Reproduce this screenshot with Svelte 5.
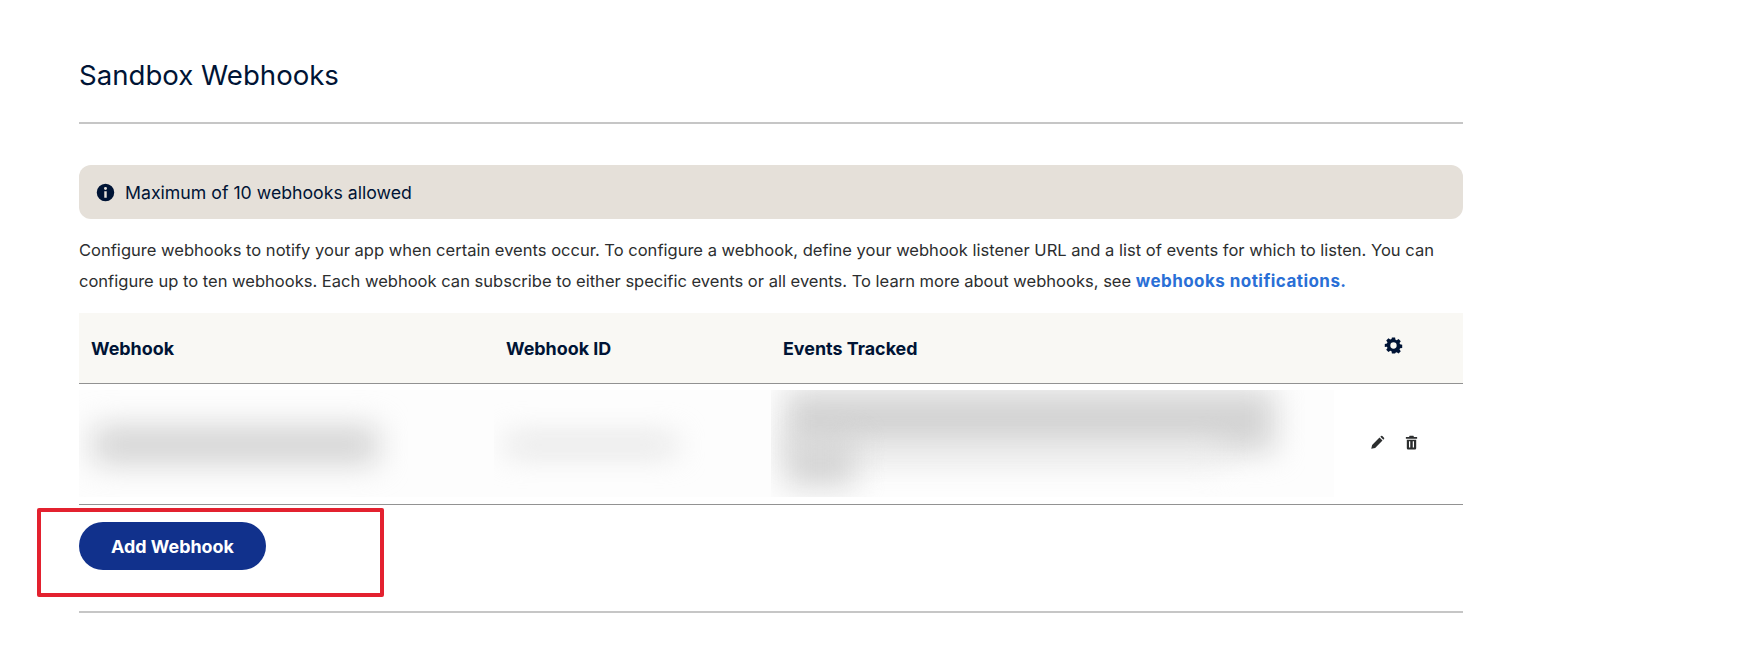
<script>
  const columns = ['Webhook', 'Webhook ID', 'Events Tracked'];
</script>

<div class="page">
  <h1 class="title">Sandbox Webhooks</h1>
  <hr class="rule" />

  <div class="notice">
    <svg class="notice-icon" viewBox="0 0 24 24" aria-hidden="true">
      <path d="M12 2a10 10 0 1 0 0 20 10 10 0 0 0 0-20zm1.4 16h-2.8v-7.4h2.8V18zM12 9.1a1.7 1.7 0 1 1 0-3.4 1.7 1.7 0 0 1 0 3.4z" />
    </svg>
    <span>Maximum of 10 webhooks allowed</span>
  </div>

  <p class="intro">
    Configure webhooks to notify your app when certain events occur. To configure a webhook, define your webhook listener URL and a list of events for which to listen. You can configure up to ten webhooks. Each webhook can subscribe to either specific events or all events. To learn more about webhooks, see <a href="#top">webhooks notifications.</a>
  </p>

  <div class="table">
    <div class="row head">
      {#each columns as column}
        <div class="cell">{column}</div>
      {/each}
      <div class="cell gear-cell">
        <svg class="gear" viewBox="0 0 24 24" aria-hidden="true">
          <path fill-rule="evenodd" d="M10 2h4l.5 2.7 1.6.7 2.3-1.6 2.8 2.8-1.6 2.3.7 1.6 2.7.5v4l-2.7.5-.7 1.6 1.6 2.3-2.8 2.8-2.3-1.6-1.6.7L14 22h-4l-.5-2.7-1.6-.7-2.3 1.6-2.8-2.8 1.6-2.3-.7-1.6L1 14v-4l2.7-.5.7-1.6-1.6-2.3 2.8-2.8 2.3 1.6 1.6-.7L10 2zm2 6a4 4 0 1 0 0 8 4 4 0 0 0 0-8z" />
        </svg>
      </div>
    </div>

    <div class="row body">
      <div class="cell smear-cell"><div class="smear smear-name"></div></div>
      <div class="cell smear-cell"><div class="smear smear-id"></div></div>
      <div class="cell smear-cell events-cell">
        <div class="smear smear-events"></div>
        <div class="smear smear-events-low"></div>
        <div class="smear smear-events-tail"></div>
      </div>
      <div class="cell actions">
        <svg class="action" viewBox="0 0 24 24" aria-hidden="true">
          <path d="M2 22l1.400-6.200L15.200 4l4.800 4.800L8.200 20.600 2 22zM16.600 2.600l1-1a1.500 1.500 0 0 1 2.100 0l2.700 2.700a1.500 1.500 0 0 1 0 2.100l-1 1-4.800-4.800z" />
        </svg>
        <svg class="action" viewBox="0 0 24 24" aria-hidden="true">
          <path fill-rule="evenodd" d="M9 1h6l1 2h5v3H3V3h5l1-2zM4.500 7.500h15V21a2 2 0 0 1-2 2h-11a2 2 0 0 1-2-2V7.500zM8 10v10h2V10H8zm6 0v10h2V10h-2z" />
        </svg>
      </div>
    </div>
  </div>

  <div class="footer">
    <button type="button" class="add-btn">Add Webhook</button>
    <div class="highlight"></div>
  </div>
  <hr class="rule end" />
</div>

<style>
  :global(body) {
    margin: 0;
    background: #fff;
  }
  .page {
    width: 1384px;
    margin-left: 79px;
    padding-top: 56px;
    font-family: Inter, "Liberation Sans", sans-serif;
    color: #001435;
  }
  .title {
    margin: 0;
    font-size: 27.6px;
    line-height: 38px;
    font-weight: 400;
  }
  .rule {
    height: 2px;
    margin: 28px 0 0;
    border: 0;
    background: #c6c6c6;
  }
  .notice {
    display: flex;
    align-items: center;
    gap: 9px;
    height: 54px;
    margin-top: 41px;
    padding: 1px 16px 0;
    box-sizing: border-box;
    border-radius: 12px;
    background: #e5e0d9;
    font-size: 17.7px;
  }
  .notice-icon {
    width: 21px;
    height: 21px;
    margin-top: -1px;
    fill: #001435;
  }
  .intro {
    margin: 16px 0 0;
    font-size: 16.55px;
    line-height: 31px;
    color: #2c2e2f;
  }
  .intro a {
    color: #2a6fd6;
    font-size: 17px;
    font-weight: 700;
    letter-spacing: 0.45px;
    text-decoration: none;
  }
  .table {
    margin-top: 16px;
  }
  .row {
    display: grid;
    grid-template-columns: 415px 277px 1fr 144px;
  }
  .head {
    height: 71px;
    align-items: center;
    background: #f9f8f4;
    border-bottom: 1px solid #929292;
    box-sizing: border-box;
    font-size: 17.9px;
    font-weight: 700;
  }
  .head .cell {
    padding-left: 12px;
  }
  .gear-cell {
    display: flex;
    padding-bottom: 5px;
  }
  .gear {
    width: 19px;
    height: 19px;
    margin-left: 53px;
    fill: #001435;
  }
  .body {
    height: 121px;
    box-sizing: border-box;
    border-bottom: 1px solid #929292;
  }
  .smear-cell {
    position: relative;
    overflow: hidden;
    height: 107px;
    margin-top: 6px;
    background: #fdfdfd;
  }
  .smear {
    position: absolute;
    background: #d4d4d4;
    filter: blur(15px);
  }
  .smear-name {
    left: 14px;
    top: 36px;
    width: 285px;
    height: 38px;
  }
  .smear-id {
    left: 12px;
    top: 47px;
    width: 170px;
    height: 16px;
    background: #dcdcdc;
  }
  .events-cell {
    margin-right: -15px;
  }
  .smear-events {
    left: 14px;
    top: 0;
    width: 490px;
    height: 62px;
  }
  .smear-events-low {
    left: 80px;
    top: 56px;
    width: 370px;
    height: 18px;
    background: #eeeeee;
  }
  .smear-events-tail {
    left: 14px;
    top: 50px;
    width: 70px;
    height: 46px;
  }
  .actions {
    display: flex;
    align-items: center;
    gap: 19px;
    padding-left: 51px;
    padding-bottom: 4px;
  }
  .action {
    width: 15px;
    height: 15px;
    fill: #2c2e2f;
  }
  .footer {
    position: relative;
    height: 106px;
    padding-top: 17px;
    box-sizing: border-box;
  }
  .add-btn {
    display: block;
    width: 187px;
    height: 48px;
    padding: 0;
    border: 0;
    border-radius: 24px;
    background: #11318c;
    color: #fff;
    font: 700 17.9px Inter, "Liberation Sans", sans-serif;
  }
  .highlight {
    position: absolute;
    left: -42px;
    top: 3px;
    width: 347px;
    height: 89px;
    box-sizing: border-box;
    border: 4px solid #e3212f;
    border-radius: 2px;
  }
  .end {
    margin-top: 0;
  }
</style>
